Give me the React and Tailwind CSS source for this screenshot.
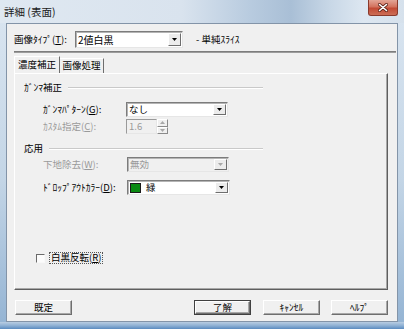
import React from "react";

const F = "font-['Noto_Sans_CJK_JP',sans-serif]";

function Tri({ disabled, up }) {
  return (
    <svg width="5" height="3" viewBox="0 0 5 3" className="block">
      <path d={up ? "M0 3h5L2.5 0z" : "M0 0h5L2.5 3z"} fill={disabled ? "#a8a8a8" : "#000"} />
    </svg>
  );
}

function Combo({ className, children, disabled }) {
  return (
    <div
      className={`flex border border-t-[#7c7c7c] border-l-[#7c7c7c] border-r-[#e6e6e6] border-b-[#e6e6e6] shadow-[inset_1px_1px_0_#b4b4b4] ${
        disabled ? "bg-[#f0f0f0] text-[#9a9a9a]" : "bg-white text-black"
      } ${className}`}
    >
      <div className="flex flex-1 items-center pl-[2px] pt-[1px] leading-none">{children}</div>
      <div className="my-[1px] mr-[1px] flex w-[13px] items-center justify-center border border-t-white border-l-white border-r-[#6e6e6e] border-b-[#6e6e6e] bg-[#ececec]">
        <Tri disabled={disabled} />
      </div>
    </div>
  );
}

function Btn({ children, def }) {
  return (
    <div className={`h-[15px] w-[57px] ${def ? "border border-[#404040]" : ""}`}>
      <div className="flex h-full w-full items-center justify-center border border-t-white border-l-white border-r-[#6e6e6e] border-b-[#6e6e6e] bg-[#f0f0f0] text-[9.5px] leading-none text-black shadow-[inset_-1px_-1px_0_#a8a8a8]">
        {children}
      </div>
    </div>
  );
}

function GroupLabel({ children, className }) {
  return (
    <div className={`ml-[9px] flex h-[12px] w-[239px] items-center ${className}`}>
      <span className="leading-none">{children}</span>
      <div className="ml-[6px] flex-1 border-t border-b border-t-[#c9c9c9] border-b-white" />
    </div>
  );
}

export default function App() {
  return (
    <div className={`${F} flex h-[329px] w-[404px] flex-col overflow-hidden bg-[linear-gradient(180deg,#dbe6f1_0%,#c3d5e6_55%,#93b3d3_100%)] text-black`}>
      {/* title bar */}
      <div className="relative flex h-[23px] items-start bg-[linear-gradient(90deg,#dfe8f1_0%,#d9e3ee_45%,#b8cbdf_62%,#a9bfd6_72%,#c9d8e7_82%,#dde7f1_90%,#d6e1ec_100%)]">
        <span className="ml-[4px] mt-[7px] text-[10.5px] leading-none text-[#1b1b1b]">詳細 (表面)</span>
        <div className="ml-auto mr-[6px] flex h-[16px] w-[30px] items-center justify-center rounded-b-[3px] border border-t-0 border-[#8a3a2c] bg-[linear-gradient(180deg,#e3a596_0%,#d3735e_45%,#c24a34_55%,#cc6e56_100%)]">
          <svg width="10" height="9" viewBox="0 0 10 9">
            <path d="M1.5 1.5l7 6M8.5 1.5l-7 6" stroke="#5b2319" strokeWidth="3" strokeLinecap="round" />
            <path d="M1.5 1.5l7 6M8.5 1.5l-7 6" stroke="#fff" strokeWidth="1.6" strokeLinecap="round" />
          </svg>
        </div>
      </div>

      {/* body */}
      <div className="mx-[6px] flex h-[299px] flex-col border border-[#8394a8] bg-[#f0f0f0] text-[9.5px]">
        {/* row 1 */}
        <div className="mt-[7px] flex h-[17px] items-center">
          <span className="ml-[7px] w-[61px] leading-none">
            画像ﾀｲﾌﾟ(<span className="underline">T</span>):
          </span>
          <Combo className="h-[17px] w-[108px] text-[10px]">2値白黒</Combo>
          <span className="ml-[13px] leading-none">- 単純ｽﾗｲｽ</span>
        </div>
        <div className="ml-[7px] mr-[1px] mt-[3px] h-[2px] border-t border-b border-t-[#7d7d7d] border-b-[#9c9c9c]" />

        {/* tabs */}
        <div className="ml-[7px] mt-[3px] flex h-[17px] items-end">
          <div className="flex h-[17px] w-[46px] items-center justify-center border-l border-t border-r border-l-white border-t-white border-r-[#6e6e6e] leading-none">
            濃度補正
          </div>
          <div className="flex h-[15px] w-[44px] items-center justify-center border-t border-r border-t-white border-r-[#6e6e6e] leading-none">
            画像処理
          </div>
        </div>

        {/* panel */}
        <div className="ml-[7px] mr-[9px] flex h-[217px] flex-col border border-t-white border-l-white border-r-[#5e5e5e] border-b-[#5e5e5e] shadow-[inset_-1px_-1px_0_#a8a8a8]">
          <GroupLabel className="mt-[8px]">ｶﾞﾝﾏ補正</GroupLabel>

          <div className="mt-[8px] flex h-[15px] items-center">
            <span className="ml-[28px] w-[83px] leading-none">
              ｶﾞﾝﾏﾊﾟﾀｰﾝ(<span className="underline">G</span>):
            </span>
            <Combo className="h-[15px] w-[102px]">なし</Combo>
          </div>

          <div className="mt-[2px] flex h-[15px] items-center">
            <span className="ml-[28px] w-[83px] leading-none text-[#9a9a9a]">
              ｶｽﾀﾑ指定(<span className="underline">C</span>):
            </span>
            <div className="flex h-[15px] w-[31px] items-center border border-t-[#9a9a9a] border-l-[#9a9a9a] border-r-[#e6e6e6] border-b-[#e6e6e6] bg-[#f0f0f0] pl-[2px] pt-[1px] leading-none text-[#9a9a9a]">
              1.6
            </div>
            <div className="flex h-[15px] w-[11px] flex-col">
              <div className="flex flex-1 items-center justify-center border border-t-white border-l-white border-r-[#8a8a8a] border-b-[#8a8a8a]">
                <Tri disabled up />
              </div>
              <div className="flex flex-1 items-center justify-center border border-t-white border-l-white border-r-[#8a8a8a] border-b-[#8a8a8a]">
                <Tri disabled />
              </div>
            </div>
          </div>

          <GroupLabel className="mt-[9px]">応用</GroupLabel>

          <div className="mt-[2px] flex h-[15px] items-center">
            <span className="ml-[28px] w-[84px] leading-none text-[#9a9a9a]">
              下地除去(<span className="underline">W</span>):
            </span>
            <Combo disabled className="h-[15px] w-[102px]">無効</Combo>
          </div>

          <div className="mt-[8px] flex h-[15px] items-center">
            <span className="ml-[28px] w-[84px] leading-none">
              ﾄﾞﾛｯﾌﾟｱｳﾄｶﾗｰ(<span className="underline">D</span>):
            </span>
            <Combo className="h-[15px] w-[103px]">
              <span className="mr-[5px] inline-block h-[10px] w-[11px] border border-[#1a1a1a] bg-[#0a8a12]" />
              緑
            </Combo>
          </div>

          <div className="mt-[57px] flex h-[12px] items-center">
            <div className="ml-[21px] h-[9px] w-[9px] border border-t-[#6a6a6a] border-l-[#6a6a6a] border-r-[#f8f8f8] border-b-[#f8f8f8] bg-[#fbfbfb]" />
            <span className="ml-[4px] flex h-[12px] items-center border border-dotted border-[#555] px-[1px] leading-none">
              白黒反転(<span className="underline">R</span>)
            </span>
          </div>
        </div>

        {/* buttons */}
        <div className="mt-[10px] flex items-center">
          <div className="ml-[8px]">
            <Btn>既定</Btn>
          </div>
          <div className="flex-1" />
          <Btn def>了解</Btn>
          <div className="w-[12px]" />
          <Btn>ｷｬﾝｾﾙ</Btn>
          <div className="w-[11px]" />
          <Btn>ﾍﾙﾌﾟ</Btn>
          <div className="w-[9px]" />
        </div>
      </div>

      {/* bottom frame */}
      <div className="flex-1 bg-[linear-gradient(180deg,#b9cde2_0%,#8fb1d4_50%,#5a8bc0_100%)]" />
    </div>
  );
}
